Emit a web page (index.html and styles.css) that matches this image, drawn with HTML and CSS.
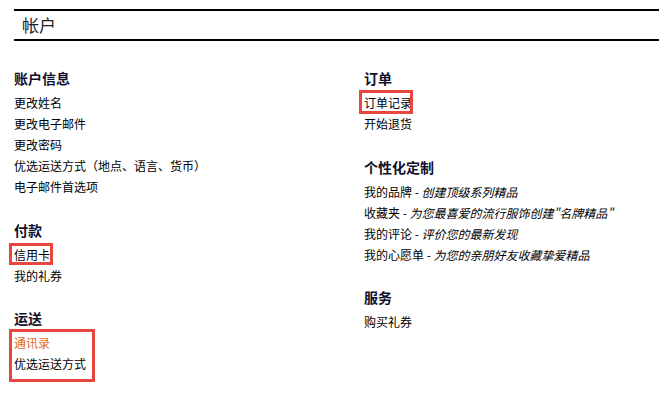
FILE: index.html
```html
<!DOCTYPE html>
<html lang="zh-CN">
<head>
<meta charset="utf-8">
<title>帐户</title>
<link rel="stylesheet" href="styles.css">
</head>
<body>
<div class="page">
  <header class="page-header">
    <h1 class="page-title">帐户</h1>
  </header>
  <div class="columns">
    <div class="column">
      <section class="section">
        <h2 class="section-title">账户信息</h2>
        <ul class="links">
          <li>更改姓名</li>
          <li>更改电子邮件</li>
          <li>更改密码</li>
          <li>优选运送方式（地点、语言、货币）</li>
          <li>电子邮件首选项</li>
        </ul>
      </section>
      <section class="section">
        <h2 class="section-title">付款</h2>
        <ul class="links">
          <li><span class="mark mark-card">信用卡</span></li>
          <li>我的礼券</li>
        </ul>
      </section>
      <section class="section">
        <h2 class="section-title">运送</h2>
        <div class="mark-group">
          <ul class="links">
            <li class="active">通讯录</li>
            <li>优选运送方式</li>
          </ul>
        </div>
      </section>
    </div>
    <div class="column">
      <section class="section">
        <h2 class="section-title">订单</h2>
        <ul class="links">
          <li><span class="mark mark-order">订单记录</span></li>
          <li>开始退货</li>
        </ul>
      </section>
      <section class="section">
        <h2 class="section-title">个性化定制</h2>
        <ul class="links">
          <li>我的品牌 - <em>创建顶级系列精品</em></li>
          <li>收藏夹 - <em>为您最喜爱的流行服饰创建"名牌精品"</em></li>
          <li>我的评论 - <em>评价您的最新发现</em></li>
          <li>我的心愿单 - <em>为您的亲朋好友收藏挚爱精品</em></li>
        </ul>
      </section>
      <section class="section">
        <h2 class="section-title">服务</h2>
        <ul class="links">
          <li>购买礼券</li>
        </ul>
      </section>
    </div>
  </div>
</div>
</body>
</html>
```

FILE: styles.css
```css
html, body {
  margin: 0;
  padding: 0;
  background: #ffffff;
}

body {
  font-family: "Noto Sans CJK SC", "Liberation Sans", sans-serif;
  color: #000000;
  min-height: 393px;
}

.page {
  padding: 9px 0 20px 14px;
}

.page-header {
  border-top: 2px solid #000;
  border-bottom: 2px solid #000;
  height: 28px;
  display: flex;
  align-items: center;
  padding-left: 8px;
}

.page-title {
  margin: 0;
  font-size: 17px;
  font-weight: normal;
  line-height: 28px;
  color: #222222;
}

.columns {
  display: grid;
  grid-template-columns: 350px 1fr;
  margin-top: 27px;
}

.column {
  display: flex;
  flex-direction: column;
  gap: 22.5px;
}

.section-title {
  margin: 0 0 4px 0;
  font-size: 14px;
  line-height: 20px;
  font-weight: bold;
  color: #10102a;
}

.links {
  list-style: none;
  margin: 0;
  padding: 0;
  font-size: 12px;
  line-height: 21px;
}

.links li {
  white-space: nowrap;
}

.links em {
  font-style: italic;
}

.links .active {
  color: #e2661c;
}

.mark {
  position: relative;
  display: inline-block;
}

.mark::after {
  content: "";
  position: absolute;
  border: 3px solid #e8473f;
  pointer-events: none;
}

.mark-card::after {
  top: -1px;
  bottom: 0;
  left: -5px;
  right: -3px;
}

.mark-order::after {
  top: -2px;
  bottom: -1px;
  left: -5px;
  right: -1px;
}

.mark-group {
  width: fit-content;
  margin: -3px 0 0 -5px;
  padding: 0 6px 5px 2px;
  border: 3px solid #e8473f;
}
```
